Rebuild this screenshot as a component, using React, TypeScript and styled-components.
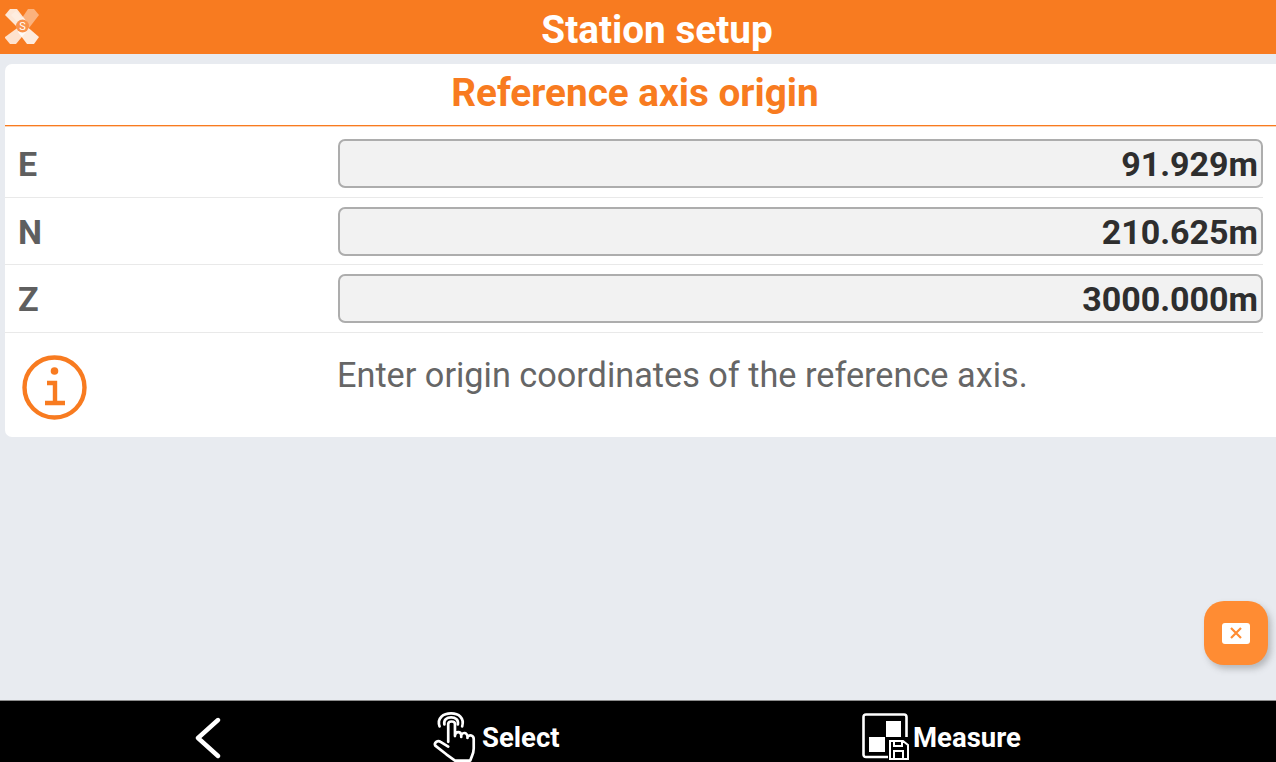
import React from 'react';
import styled, { createGlobalStyle } from 'styled-components';

const orange = '#f87b20';

const GlobalStyle = createGlobalStyle`
  html, body {
    margin: 0;
    padding: 0;
    background: #e8ebf0;
  }
  * {
    box-sizing: border-box;
  }
`;

const coordinates = [
  { label: 'E', value: '91.929m' },
  { label: 'N', value: '210.625m' },
  { label: 'Z', value: '3000.000m' },
];

function Logo() {
  return (
    <svg width="38" height="38" viewBox="0 0 38 38">
      <path d="M25 2 H31 L36 8 L26 21 L17 14 Z" fill="#fff" opacity="0.42" />
      <path d="M17 19 L23 25 L13 37 H7 L2 31 L2 30 Z" fill="#fff" opacity="0.78" />
      <path d="M2 8 L7 2 H14 L24 15 L17 23 Z" fill="#fff" opacity="0.82" />
      <path d="M8 8 L13 4 L24 16 L19 20 Z" fill="#fff" opacity="0.25" />
      <path d="M21 17 L36 30 L31 37 H24 L15 25 Z" fill="#fff" opacity="0.85" />
      <circle cx="19.5" cy="19" r="6.5" fill="#f9924a" />
      <text x="19.5" y="23" textAnchor="middle" fontSize="11" fontFamily="Roboto, sans-serif" fill="#fff">
        S
      </text>
    </svg>
  );
}

function InfoIcon() {
  return (
    <svg width="66" height="66" viewBox="0 0 66 66" fill="none" stroke={orange}>
      <circle cx="32.5" cy="32.5" r="30" strokeWidth="4.4" />
      <circle cx="32.5" cy="16" r="3.8" fill={orange} stroke="none" />
      <path d="M25 28 H33 V48 M23 48 H43" strokeWidth="4.4" />
    </svg>
  );
}

function BackIcon() {
  return (
    <svg width="28" height="42" viewBox="0 0 28 42" fill="none" stroke="#fff" strokeWidth="4.4" strokeLinecap="round" strokeLinejoin="round">
      <path d="M23 3 L3 21 L23 39" />
    </svg>
  );
}

function HandIcon() {
  return (
    <svg width="44" height="50" viewBox="0 0 44 52" fill="none" stroke="#fff" strokeWidth="2.8" strokeLinecap="round" strokeLinejoin="round">
      <path d="M7 15 C4 6 11 1.5 19 1.5 C27 1.5 33 6 30.5 15" />
      <path d="M12 13 C11 8 15 5.5 19 5.5 C23 5.5 27 8 26 13" />
      <path d="M16 31 V12.5 C16 9 23 9 23 12.5 V25 M23 24 C24 20 29 20 29.5 24 V26 M29.5 24 C31 21 35 21 36 25 V27 M36 26 C38 23 42.5 24 42.5 28 V38 C42.5 44 40 46 39 50.5 H23 L14 44 L2.5 35 C1 32 5 29 8 31 L16 36" />
    </svg>
  );
}

function MeasureIcon() {
  return (
    <svg width="48" height="47" viewBox="0 0 48 47" fill="none">
      <path d="M26 44 H4 Q1.5 44 1.5 41.5 V4 Q1.5 1.5 4 1.5 H42 Q44.5 1.5 44.5 4 V24" stroke="#fff" strokeWidth="2.6" />
      <rect x="24" y="8" width="15" height="16" fill="#fff" />
      <rect x="7" y="24" width="16" height="15" fill="#fff" />
      <path d="M28 46 V28 H41 L46 32 V46 Z M32 28 V33 H40 V28 M32 46 V38 H41 V46" stroke="#fff" strokeWidth="2" />
    </svg>
  );
}

export default function App() {
  return (
    <>
      <GlobalStyle />
      <Screen>
        <Header>
          <LogoSlot>
            <Logo />
          </LogoSlot>
          <HeaderTitle>Station setup</HeaderTitle>
        </Header>

        <Main>
          <Card>
            <CardTitle>Reference axis origin</CardTitle>
            <RowList>
              {coordinates.map((c) => (
                <Row key={c.label}>
                  <RowLabel>{c.label}</RowLabel>
                  <ValueField>{c.value}</ValueField>
                </Row>
              ))}
            </RowList>
            <InfoRow>
              <InfoIcon />
              <InfoText>Enter origin coordinates of the reference axis.</InfoText>
            </InfoRow>
          </Card>

          <FloatingButton aria-label="Clear">
            <ClearKey>
              <svg width="14" height="14" viewBox="0 0 14 14" fill="none" stroke="#ff8c33" strokeWidth="2.2">
                <path d="M2 2 L12 12 M12 2 L2 12" />
              </svg>
            </ClearKey>
          </FloatingButton>
        </Main>

        <BottomBar>
          <BarItem>
            <BackIcon />
          </BarItem>
          <BarItem $gap={6}>
            <HandIcon />
            <BarLabel>Select</BarLabel>
          </BarItem>
          <BarItem $gap={3}>
            <MeasureIcon />
            <BarLabel>Measure</BarLabel>
          </BarItem>
        </BottomBar>
      </Screen>
    </>
  );
}

const Screen = styled.div`
  width: 1276px;
  height: 762px;
  overflow: hidden;
  display: flex;
  flex-direction: column;
  background: #e8ebf0;
  font-family: Roboto, 'Liberation Sans', sans-serif;
`;

const Header = styled.header`
  height: 54px;
  flex: none;
  display: flex;
  align-items: center;
  background: ${orange};
`;

const LogoSlot = styled.div`
  width: 38px;
  height: 38px;
  align-self: flex-start;
  margin-top: 7px;
  margin-left: 3px;
  margin-right: -3px;
  flex: none;
`;

const HeaderTitle = styled.h1`
  flex: 1;
  margin: 0;
  padding-top: 4px;
  text-align: center;
  color: #fff;
  font-size: 38.7px;
  font-weight: 700;
`;

const Main = styled.main`
  flex: 1;
  position: relative;
  padding: 10px 0 0 5px;
`;

const Card = styled.section`
  background: #fff;
  border-radius: 7px 0 0 7px;
  height: 373px;
`;

const CardTitle = styled.h2`
  height: 62px;
  margin: 0;
  padding: 0 11px 5px 0;
  display: flex;
  align-items: center;
  justify-content: center;
  color: ${orange};
  font-size: 38.7px;
  font-weight: 700;
  border-bottom: 1px solid ${orange};
  box-shadow: 0 1px 0 rgba(248, 123, 32, 0.35);
`;

const RowList = styled.div`
  padding-top: 4px;
`;

const Row = styled.div`
  height: 67.5px;
  margin-right: 13px;
  display: grid;
  grid-template-columns: 333px 1fr;
  align-items: center;
  border-bottom: 1px solid #e9e9e9;
`;

const RowLabel = styled.div`
  padding: 2px 0 0 13px;
  color: #5f5f5f;
  font-size: 34px;
  font-weight: 700;
`;

const ValueField = styled.div`
  height: 49px;
  margin-top: 1px;
  padding: 1px 3px 0 0;
  display: flex;
  align-items: center;
  justify-content: flex-end;
  background: #f2f2f2;
  border: 2px solid #adadad;
  border-radius: 7px;
  color: #2e2e2e;
  font-size: 34px;
  font-weight: 700;
`;

const InfoRow = styled.div`
  display: grid;
  grid-template-columns: 332px 1fr;
  padding: 22px 0 0 17px;
  margin-right: 13px;
`;

const InfoText = styled.div`
  margin-left: -17px;
  color: #666;
  font-size: 34.25px;
  font-weight: 400;
`;

const FloatingButton = styled.button`
  position: absolute;
  left: 1204px;
  top: 547px;
  width: 64px;
  height: 64px;
  padding: 0;
  display: flex;
  align-items: center;
  justify-content: center;
  border: none;
  border-radius: 20px;
  background: #ff8c33;
  box-shadow: 3px 4px 6px rgba(90, 90, 90, 0.35);
`;

const ClearKey = styled.span`
  width: 28px;
  height: 21px;
  display: flex;
  align-items: center;
  justify-content: center;
  background: #fff;
  border-radius: 3px;
`;

const BottomBar = styled.footer`
  height: 62px;
  flex: none;
  padding-top: 10px;
  display: grid;
  grid-template-columns: 195px 237px 430px 1fr;
  background: #000;
  border-top: 1px solid #8c8c8c;
  & > :nth-child(1) {
    grid-column: 2;
    padding-top: 2px;
  }
  & > :nth-child(2) {
    grid-column: 3;
  }
  & > :nth-child(3) {
    grid-column: 4;
  }
`;

const BarItem = styled.div<{ $gap?: number }>`
  display: flex;
  align-items: center;
  gap: ${(p) => p.$gap ?? 0}px;
`;

const BarLabel = styled.span`
  padding-top: 1px;
  color: #fff;
  font-size: 27.5px;
  font-weight: 700;
`;
